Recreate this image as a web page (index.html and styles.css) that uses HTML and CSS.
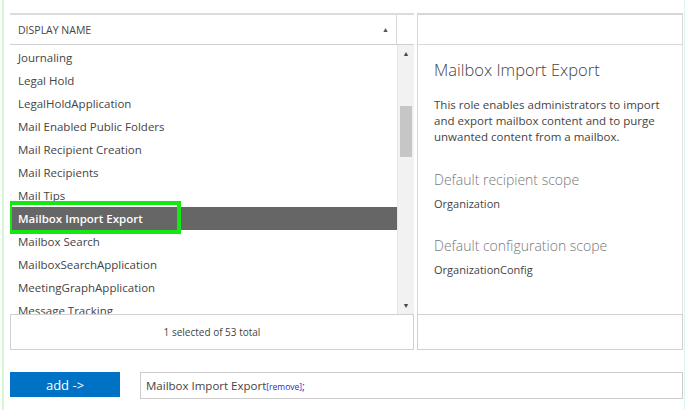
FILE: index.html
```html
<!DOCTYPE html>
<html>
<head>
<meta charset="utf-8">
<link rel="stylesheet" href="styles.css">
</head>
<body>
<div class="page">
  <div class="panels">
    <div class="list-panel">
      <div class="list-head">
        <div class="col-name">DISPLAY NAME <span class="sort">&#9650;</span></div>
        <div class="col-spacer"></div>
      </div>
      <div class="list-body">
        <div class="rows">
          <div class="row">Journaling</div>
          <div class="row">Legal Hold</div>
          <div class="row">LegalHoldApplication</div>
          <div class="row">Mail Enabled Public Folders</div>
          <div class="row">Mail Recipient Creation</div>
          <div class="row">Mail Recipients</div>
          <div class="row">Mail Tips</div>
          <div class="row selected">Mailbox Import Export</div>
          <div class="row">Mailbox Search</div>
          <div class="row">MailboxSearchApplication</div>
          <div class="row">MeetingGraphApplication</div>
          <div class="row">Message Tracking</div>
        </div>
        <div class="scrollbar">
          <div class="sb-arrow">&#9650;</div>
          <div class="sb-track"><div class="sb-thumb"></div></div>
          <div class="sb-arrow">&#9660;</div>
        </div>
      </div>
      <div class="list-foot">1 selected of 53 total</div>
    </div>
    <div class="detail-panel">
      <div class="detail-head"></div>
      <div class="detail-body">
        <div class="d-title">Mailbox Import Export</div>
        <div class="d-desc">This role enables administrators to import and export mailbox content and to purge unwanted content from a mailbox.</div>
        <div class="d-label">Default recipient scope</div>
        <div class="d-value">Organization</div>
        <div class="d-label second">Default configuration scope</div>
        <div class="d-value">OrganizationConfig</div>
      </div>
      <div class="detail-foot"></div>
    </div>
  </div>
  <div class="actions">
    <button class="add-btn">add -&gt;</button>
    <div class="picked">Mailbox Import Export<span class="remove">[remove]</span><span class="semi">;</span></div>
  </div>
</div>
</body>
</html>
```
FILE: styles.css
```css
*, *::before, *::after { box-sizing: border-box; }
html, body { margin: 0; padding: 0; background: #fff; }
body {
  font-family: "Open Sans", "Noto Sans", sans-serif;
  color: #333;
  width: 689px;
  height: 410px;
  overflow: hidden;
}
.page {
  margin-left: 2px;
  width: 683px;
  height: 410px;
  border-left: 2px solid #d4f7d4;
  border-right: 1px solid #d9f5ee;
  padding: 13px 0 0 6px;
}
.panels {
  display: flex;
  gap: 3px;
}
.list-panel {
  width: 404px;
  display: flex;
  flex-direction: column;
}
.list-head {
  height: 32px;
  display: flex;
  border-top: 2px solid #dcdcdc;
  border-bottom: 1px solid #d0d0d0;
}
.col-name {
  flex: 1;
  display: flex;
  align-items: center;
  justify-content: space-between;
  padding: 0 7px 0 8px;
  font-size: 10.5px;
  color: #444;
  border-right: 1px solid #d8d8d8;
}
.sort { font-size: 7px; color: #555; }
.col-spacer { width: 17px; }
.list-body {
  height: 269px;
  display: flex;
  overflow: hidden;
}
.rows {
  flex: 1;
  padding-top: 1px;
  overflow: hidden;
}
.row {
  height: 23px;
  line-height: 23px;
  padding-left: 8px;
  font-size: 11.5px;
  color: #444;
  white-space: nowrap;
}
.row.selected {
  background: #666;
  color: #fff;
  font-weight: 600;
  position: relative;
}
.row.selected::before {
  content: "";
  position: absolute;
  left: -2px;
  top: -6px;
  width: 173px;
  height: 33px;
  border: 4px solid #13e813;
}
.scrollbar {
  width: 17px;
  background: #f2f2f2;
  display: flex;
  flex-direction: column;
  border-left: 1px solid #e6e6e6;
}
.sb-arrow {
  height: 17px;
  font-size: 7px;
  color: #444;
  text-align: center;
  line-height: 17px;
}
.sb-track { flex: 1; position: relative; }
.sb-thumb {
  position: absolute;
  left: 2px;
  right: 2px;
  top: 44px;
  height: 51px;
  background: #c6c6c6;
}
.list-foot {
  height: 36px;
  border: 1px solid #d0d0d0;
  display: flex;
  align-items: center;
  justify-content: center;
  font-size: 10px;
  color: #444;
}
.detail-panel {
  width: 266px;
  display: flex;
  flex-direction: column;
}
.detail-head {
  height: 32px;
  border-top: 2px solid #d6d6d6;
  border-left: 1px solid #d8d8d8;
  border-right: 1px solid #d8d8d8;
  border-bottom: 1px solid #d8d8d8;
}
.detail-body {
  height: 269px;
  border-left: 1px solid #d8d8d8;
  border-right: 1px solid #e4e4e4;
  padding: 13px 16px 0 16px;
}
.d-title {
  font-size: 16.5px;
  font-weight: 300;
  color: #444;
  margin-bottom: 16px;
}
.d-desc {
  font-size: 11.5px;
  line-height: 16px;
  color: #444;
  margin-bottom: 25px;
}
.d-label {
  font-size: 14px;
  font-weight: 300;
  color: #777;
  margin-bottom: 7px;
}
.d-label.second { margin-top: 25px; }
.d-value {
  font-size: 11px;
  color: #444;
}
.detail-foot {
  height: 36px;
  border: 1px solid #d0d0d0;
}
.actions {
  margin-top: 22px;
  display: flex;
  gap: 20px;
  align-items: flex-start;
}
.add-btn {
  width: 110px;
  height: 25px;
  background: #0072c6;
  border: none;
  color: #fff;
  font-family: "Open Sans", sans-serif;
  font-size: 13px;
  padding: 0;
}
.picked {
  width: 543px;
  height: 27px;
  border: 1px solid #ccc;
  padding-left: 5px;
  font-size: 11.5px;
  line-height: 25px;
  color: #444;
}
.remove { color: #2a2ad0; font-size: 8.5px; }
.semi { color: #2a2ad0; font-size: 11px; }
```
